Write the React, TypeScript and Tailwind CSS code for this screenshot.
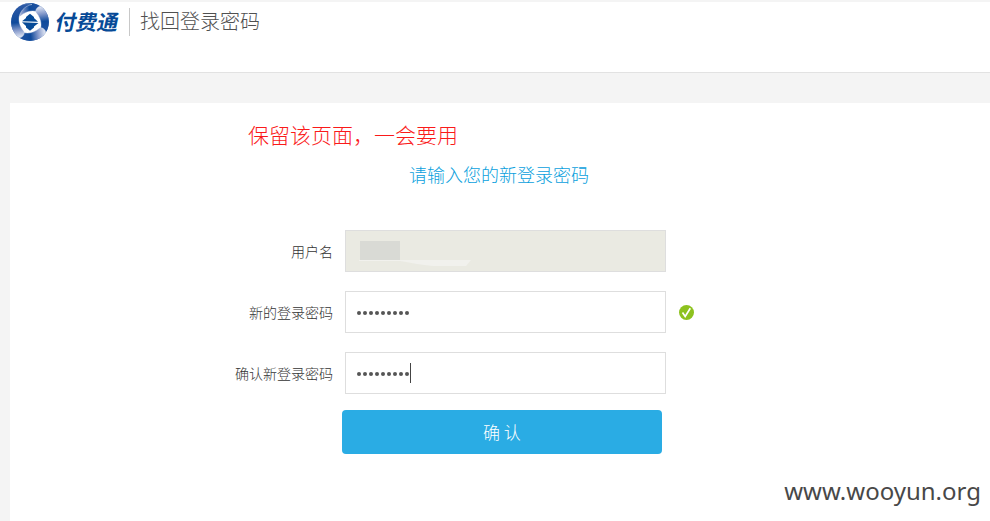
const blades = [0, 90, 180, 270];

function Logo() {
  return (
    <svg width="38" height="38" viewBox="0 0 38 38" className="shrink-0">
      <defs>
        <linearGradient id="blade" gradientUnits="userSpaceOnUse" x1="4" y1="12" x2="34" y2="8">
          <stop offset="0" stopColor="#e3e8f4" />
          <stop offset="0.25" stopColor="#8398ca" />
          <stop offset="0.5" stopColor="#0f4a9b" />
          <stop offset="1" stopColor="#2a58a5" />
        </linearGradient>
        <clipPath id="disc">
          <circle cx="19" cy="19" r="19" />
        </clipPath>
      </defs>
      <g clipPath="url(#disc)">
        <circle cx="19" cy="19" r="19" fill="#1d52a0" />
        <circle cx="19" cy="19" r="13" fill="#fff" />
        {blades.map((angle) => (
          <path
            key={angle}
            d="M3 8C9 -3 29 -4 36 10C38 14 37.500 18 36.500 21C34 9 21 3 9.500 13C7 14 3.500 12 3 8Z"
            fill="url(#blade)"
            stroke="#fff"
            strokeOpacity="0.7"
            strokeWidth="0.500"
            transform={`rotate(${angle} 19 19)`}
          />
        ))}
      </g>
      <path d="M11 18.300L15 15V14L19 10.800L23 14V15L27 18.700Z" fill="#064a97" />
      <path d="M11 19.300L27.500 19.900L23 23.500V24.500L19 27.700L15 24.500V23Z" fill="#064a97" />
    </svg>
  );
}

function Dots() {
  return (
    <div className="flex gap-[2px]">
      {Array.from({ length: 9 }).map((_, i) => (
        <span key={i} className="size-1 rounded-full bg-[#555]" />
      ))}
    </div>
  );
}

function Row({ label, children }: { label: string; children: React.ReactNode }) {
  return (
    <div className="flex h-[42px] items-center">
      <label className="w-[323px] text-right text-sm leading-5 text-[#333]">{label}</label>
      <div className="ml-3 flex items-center">{children}</div>
    </div>
  );
}

export default function App() {
  return (
    <div className="relative h-[521px] w-[990px] overflow-hidden bg-[#f4f4f4] pt-[2px] font-['Noto_Sans_CJK_SC',sans-serif] font-light text-[#555]">
      <header className="flex h-[71px] items-start border-b border-[#e2e2e2] bg-white pt-px pl-[11px]">
        <Logo />
        <span className="mt-[3px] ml-[7px] w-[64px] -skew-x-12 text-[21px] leading-[30px] font-bold whitespace-nowrap text-[#064a97]">
          付费通
        </span>
        <div className="mt-[5px] ml-[9px] h-7 w-px bg-[#c8c8c8]" />
        <h1 className="mt-[3px] ml-[10px] text-xl leading-[30px] font-light text-[#505050]">
          找回登录密码
        </h1>
      </header>

      <main className="mt-[30px] ml-[10px] h-[418px] bg-white pt-4">
        <p className="ml-[238px] text-[21px] leading-[30px] text-[#fa1a1a]">
          保留该页面，一会要用
        </p>
        <h2 className="mt-3 ml-[399px] text-lg leading-[26px] font-light text-[#0b9fdd]">
          请输入您的新登录密码
        </h2>

        <form className="mt-[43px] flex flex-col gap-[19px]">
          <Row label="用户名">
            <div className="h-[42px] w-[321px] border border-[#dedede] bg-[#eaeae2] pt-[10px] pl-[14px]">
              <div className="h-[19px] w-10 bg-[#d9dad5]" />
              <svg width="112" height="7" className="-ml-px block">
                <path d="M0 0H112L107 6H74C62 5 54 3 41 1H0Z" fill="#f1f1ed" />
              </svg>
            </div>
          </Row>
          <Row label="新的登录密码">
            <div className="flex h-[42px] w-[321px] items-center border border-[#dedede] pl-[11px] pt-px">
              <Dots />
            </div>
            <svg width="15" height="15" viewBox="0 0 15 15" className="mt-px ml-[13px]">
              <circle cx="7.500" cy="7.500" r="7.500" fill="#8dc21f" />
              <path d="M3.500 7.500L6.200 11.500L11.300 3.300" fill="none" stroke="#fff" strokeWidth="1.700" />
            </svg>
          </Row>
          <Row label="确认新登录密码">
            <div className="flex h-[42px] w-[321px] items-center border border-[#dedede] pl-[11px] pt-px">
              <Dots />
              <span className="-mt-px ml-px h-5 w-px bg-[#444]" />
            </div>
          </Row>
        </form>

        <button className="mt-4 ml-[332px] block h-11 w-80 rounded-[4px] bg-[#2aace4] pb-px text-[17px] font-light text-white">
          确 认
        </button>
      </main>

      <div className="absolute right-[9px] bottom-[14px] font-['Noto_Sans',sans-serif] text-2xl leading-8 font-normal text-[#484848]">
        www.wooyun.org
      </div>
    </div>
  );
}
